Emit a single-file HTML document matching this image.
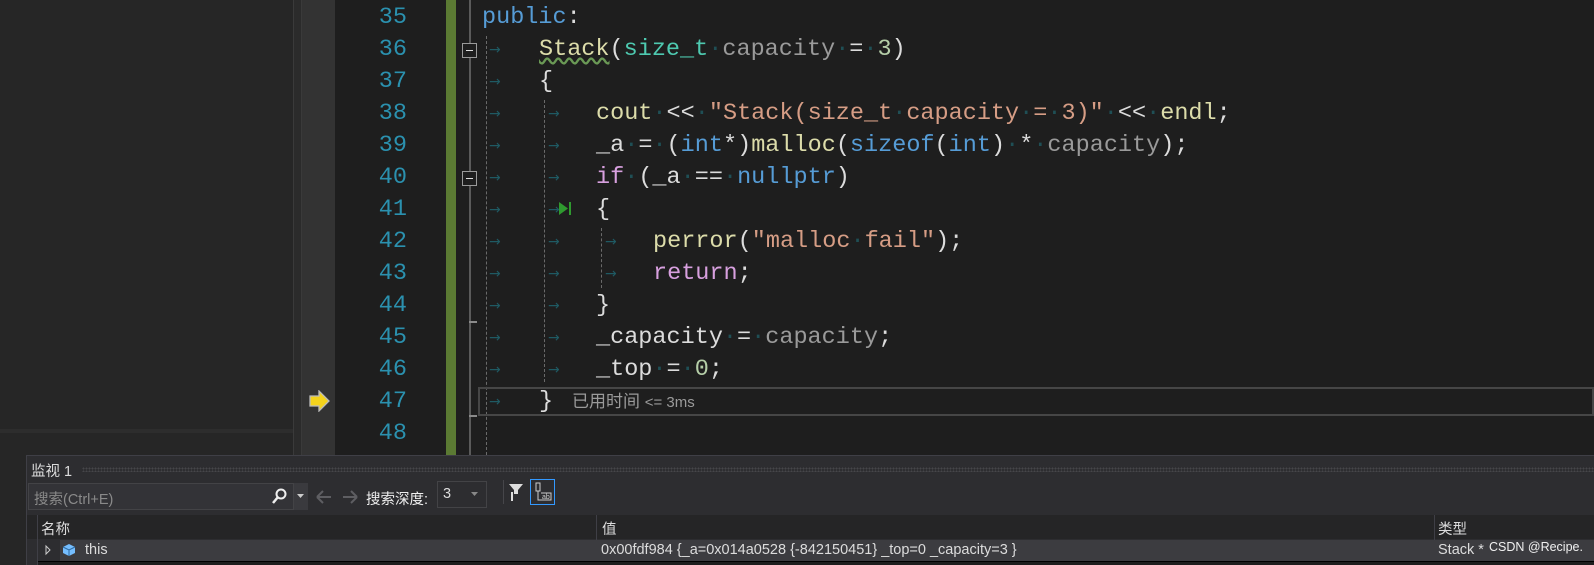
<!DOCTYPE html>
<html><head><meta charset="utf-8"><style>
*{margin:0;padding:0;box-sizing:border-box}
body{width:1594px;height:565px;background:#1e1e1e;position:relative;overflow:hidden;font-family:"Liberation Sans","Noto Sans CJK SC",sans-serif}
.a{position:absolute}
.ln{position:absolute;left:340px;width:67px;text-align:right;font:23.5px "Liberation Mono",monospace;color:#2b91af;line-height:32px}
.cl{position:absolute;font:23.5px "Liberation Mono",monospace;line-height:32px;color:#dcdcdc;white-space:pre}
.d{color:#1f4f55}
.k{color:#569cd6}.t{color:#4ec9b0}.p{color:#9a9a9a}.f{color:#dcdcaa}.s{color:#d69d85}.n{color:#b5cea8}.c{color:#d8a0df}
.ar{position:absolute;color:#1f5a63;font:14px "DejaVu Sans",sans-serif;line-height:32px}
.g{position:absolute;width:0;border-left:1.5px dashed #6a6a6a}
.fb{position:absolute;width:15px;height:15px;border:1px solid #9a9a9a;background:#1e1e1e}
.fb:after{content:"";position:absolute;left:3px;top:6px;width:7px;height:1px;background:#ddd}
.w{position:absolute;font-size:14.5px;color:#dcdcdc}
</style></head><body>
<div class="a" style="left:0;top:0;width:293px;height:455px;background:#262626"></div>
<div class="a" style="left:0;top:429px;width:293px;height:4px;background:#2d2d2d"></div>
<div class="a" style="left:0;top:455px;width:26px;height:110px;background:#262626"></div>
<div class="a" style="left:293px;top:0;width:9px;height:455px;background:#2b2b2b;border-left:1px solid #3a3a3a;border-right:1px solid #3a3a3a"></div>
<div class="a" style="left:302px;top:0;width:33px;height:455px;background:#333"></div>
<svg class="a" style="left:308px;top:390px" width="24" height="22"><path d="M2 6h9V1l10 10-10 10v-5H2z" fill="#f4d31c" stroke="#bbb" stroke-width="1.3"/></svg>

<div class="a" style="left:446px;top:0;width:10px;height:455px;background:#5b7a33"></div>
<div class="a" style="left:469px;top:0;width:2px;height:455px;background:#5a5a5a"></div>
<div class="a" style="left:469px;top:321px;width:8px;height:2px;background:#8a8a8a"></div>
<div class="a" style="left:469px;top:415px;width:8px;height:2px;background:#8a8a8a"></div>
<div class="fb" style="left:462px;top:43px"></div>
<div class="fb" style="left:462px;top:171px"></div>
<div class="g" style="left:486px;top:36px;height:419px"></div>
<div class="g" style="left:544px;top:100px;height:282px"></div>
<div class="g" style="left:601px;top:228px;height:60px"></div>

<div class="a" style="left:478px;top:387px;width:1116px;height:29px;border:2px solid #464646"></div>

<div class="ln" style="top:2px">35</div><div class="ln" style="top:34px">36</div><div class="ln" style="top:66px">37</div><div class="ln" style="top:98px">38</div><div class="ln" style="top:130px">39</div><div class="ln" style="top:162px">40</div><div class="ln" style="top:194px">41</div><div class="ln" style="top:226px">42</div><div class="ln" style="top:258px">43</div><div class="ln" style="top:290px">44</div><div class="ln" style="top:322px">45</div><div class="ln" style="top:354px">46</div><div class="ln" style="top:386px">47</div><div class="ln" style="top:418px">48</div>

<div class="ar" style="left:489px;top:34px">→</div>
<div class="ar" style="left:489px;top:66px">→</div>
<div class="ar" style="left:489px;top:98px">→</div><div class="ar" style="left:548px;top:98px">→</div>
<div class="ar" style="left:489px;top:130px">→</div><div class="ar" style="left:548px;top:130px">→</div>
<div class="ar" style="left:489px;top:162px">→</div><div class="ar" style="left:548px;top:162px">→</div>
<div class="ar" style="left:489px;top:194px">→</div><div class="ar" style="left:548px;top:194px">→</div>
<svg class="a" style="left:558px;top:200px" width="14" height="18"><path d="M1 2v13l9-6.5z" fill="#2f9a2f"/><rect x="11" y="2" width="2" height="13" fill="#2f9a2f"/></svg>
<div class="ar" style="left:489px;top:226px">→</div><div class="ar" style="left:548px;top:226px">→</div><div class="ar" style="left:605px;top:226px">→</div>
<div class="ar" style="left:489px;top:258px">→</div><div class="ar" style="left:548px;top:258px">→</div><div class="ar" style="left:605px;top:258px">→</div>
<div class="ar" style="left:489px;top:290px">→</div><div class="ar" style="left:548px;top:290px">→</div>
<div class="ar" style="left:489px;top:322px">→</div><div class="ar" style="left:548px;top:322px">→</div>
<div class="ar" style="left:489px;top:354px">→</div><div class="ar" style="left:548px;top:354px">→</div>
<div class="ar" style="left:489px;top:386px">→</div>

<div class="cl" style="left:482px;top:2px"><span class="k">public</span>:</div>
<div class="cl" style="left:539px;top:34px"><span class="f" style="text-decoration:underline wavy #6a9955">Stack</span>(<span class="t">size_t</span><span class="d">·</span><span class="p">capacity</span><span class="d">·</span>=<span class="d">·</span><span class="n">3</span>)</div>
<div class="cl" style="left:539px;top:66px">{</div>
<div class="cl" style="left:596px;top:98px"><span class="f">cout</span><span class="d">·</span>&lt;&lt;<span class="d">·</span><span class="s">"Stack(size_t<span class="d">·</span>capacity<span class="d">·</span>=<span class="d">·</span>3)"</span><span class="d">·</span>&lt;&lt;<span class="d">·</span><span class="f">endl</span>;</div>
<div class="cl" style="left:596px;top:130px">_a<span class="d">·</span>=<span class="d">·</span>(<span class="k">int</span>*)<span class="f">malloc</span>(<span class="k">sizeof</span>(<span class="k">int</span>)<span class="d">·</span>*<span class="d">·</span><span class="p">capacity</span>);</div>
<div class="cl" style="left:596px;top:162px"><span class="c">if</span><span class="d">·</span>(_a<span class="d">·</span>==<span class="d">·</span><span class="k">nullptr</span>)</div>
<div class="cl" style="left:596px;top:194px">{</div>
<div class="cl" style="left:653px;top:226px"><span class="f">perror</span>(<span class="s">"malloc<span class="d">·</span>fail"</span>);</div>
<div class="cl" style="left:653px;top:258px"><span class="c">return</span>;</div>
<div class="cl" style="left:596px;top:290px">}</div>
<div class="cl" style="left:596px;top:322px">_capacity<span class="d">·</span>=<span class="d">·</span><span class="p">capacity</span>;</div>
<div class="cl" style="left:596px;top:354px">_top<span class="d">·</span>=<span class="d">·</span><span class="n">0</span>;</div>
<div class="cl" style="left:539px;top:386px">}</div>
<div class="a" style="left:572px;top:391px;font-size:17px;color:#9a9a9a;line-height:22px">已用时间 <span style="font-size:15px">&lt;= 3ms</span></div>

<div class="a" style="left:26px;top:455px;width:1568px;height:110px;background:#2d2d30;border-top:1px solid #3f3f46;border-left:1px solid #3f3f46"></div>
<div class="a" style="left:31px;top:460px;font-size:14.5px;color:#dcdcdc">监视 1</div>
<div class="a" style="left:82px;top:467px;width:1512px;height:5px;background-image:radial-gradient(#46464a 1px,transparent 1px);background-size:3px 3px"></div>
<div class="a" style="left:28px;top:483px;width:266px;height:27px;background:#333337;border:1px solid #434346"></div>
<div class="a" style="left:34px;top:488px;font-size:14.5px;color:#8a8a8a">搜索(Ctrl+E)</div>
<svg class="a" style="left:270px;top:488px" width="38" height="18"><circle cx="11" cy="6" r="4.5" fill="none" stroke="#eee" stroke-width="2"/><path d="M8 9l-5 6" stroke="#eee" stroke-width="2.5"/></svg>
<div class="a" style="left:294px;top:483px;width:14px;height:27px;background:#3a3a3e"></div>
<svg class="a" style="left:296px;top:492px" width="10" height="8"><path d="M1 2h7l-3.5 4z" fill="#ccc"/></svg>
<svg class="a" style="left:314px;top:488px" width="50" height="18"><path d="M3 9h14M3 9l6-6M3 9l6 6M29 9h14M43 9l-6-6M43 9l-6 6" stroke="#5e5e62" stroke-width="2" fill="none"/></svg>
<div class="a" style="left:366px;top:488px;font-size:14.5px;color:#eee">搜索深度:</div>
<div class="a" style="left:437px;top:481px;width:50px;height:27px;border:1px solid #434346;background:#2d2d30"></div>
<div class="a" style="left:443px;top:486px;font-size:14.5px;color:#dcdcdc">3</div>
<svg class="a" style="left:470px;top:490px" width="10" height="8"><path d="M1 2h7l-3.5 4z" fill="#888"/></svg>
<div class="a" style="left:503px;top:480px;width:1px;height:24px;background:#46464a"></div>
<svg class="a" style="left:507px;top:482px" width="18" height="20"><path d="M2 2h14l-5 6v4H7V8z" fill="#ddd"/><path d="M5 10v9" stroke="#ddd" stroke-width="2"/></svg>
<div class="a" style="left:530px;top:479px;width:25px;height:26px;border:1px solid #3399ff"></div>
<svg class="a" style="left:532px;top:481px" width="22" height="22"><rect x="4" y="2" width="4" height="8" fill="none" stroke="#ccc"/><path d="M6 10v9h13v-7H9" fill="none" stroke="#ccc"/><text x="10" y="18" font-size="7" fill="#ccc" font-family="Liberation Sans">ab</text></svg>

<div class="a" style="left:27px;top:515px;width:1567px;height:24px;background:#252526"></div>
<div class="a" style="left:37px;top:515px;width:1px;height:50px;background:#3f3f46"></div>
<div class="w" style="left:41px;top:518px">名称</div>
<div class="a" style="left:596px;top:515px;width:1px;height:50px;background:#3f3f46"></div>
<div class="w" style="left:602px;top:518px">值</div>
<div class="a" style="left:1434px;top:515px;width:1px;height:50px;background:#3f3f46"></div>
<div class="w" style="left:1438px;top:518px">类型</div>
<div class="a" style="left:38px;top:540px;width:1556px;height:21px;background:#3c3c40"></div>
<div class="a" style="left:38px;top:540px;width:22px;height:21px;background:#2d2d30"></div>
<svg class="a" style="left:44px;top:544px" width="8" height="12"><path d="M2 2l4 4-4 4z" fill="none" stroke="#ccc"/></svg>
<svg class="a" style="left:61px;top:542px" width="16" height="16"><path d="M2 5l6-3 6 3v6l-6 3-6-3z" fill="#75beff"/><path d="M2 5l6 3 6-3M8 8v6" stroke="#2d6aa0" fill="none"/></svg>
<div class="w" style="left:85px;top:542px">this</div>
<div class="w" style="left:601px;top:542px">0x00fdf984 {_a=0x014a0528 {-842150451} _top=0 _capacity=3 }</div>
<div class="w" style="left:1438px;top:542px">Stack *</div>
<div class="a" style="left:1489px;top:540px;font-size:12.5px;color:#f0f0f0">CSDN @Recipe.</div>
<div class="a" style="left:38px;top:561px;width:1556px;height:1px;background:#000"></div>
<div class="a" style="left:38px;top:562px;width:1556px;height:3px;background:#1e1e1e"></div>
</body></html>
